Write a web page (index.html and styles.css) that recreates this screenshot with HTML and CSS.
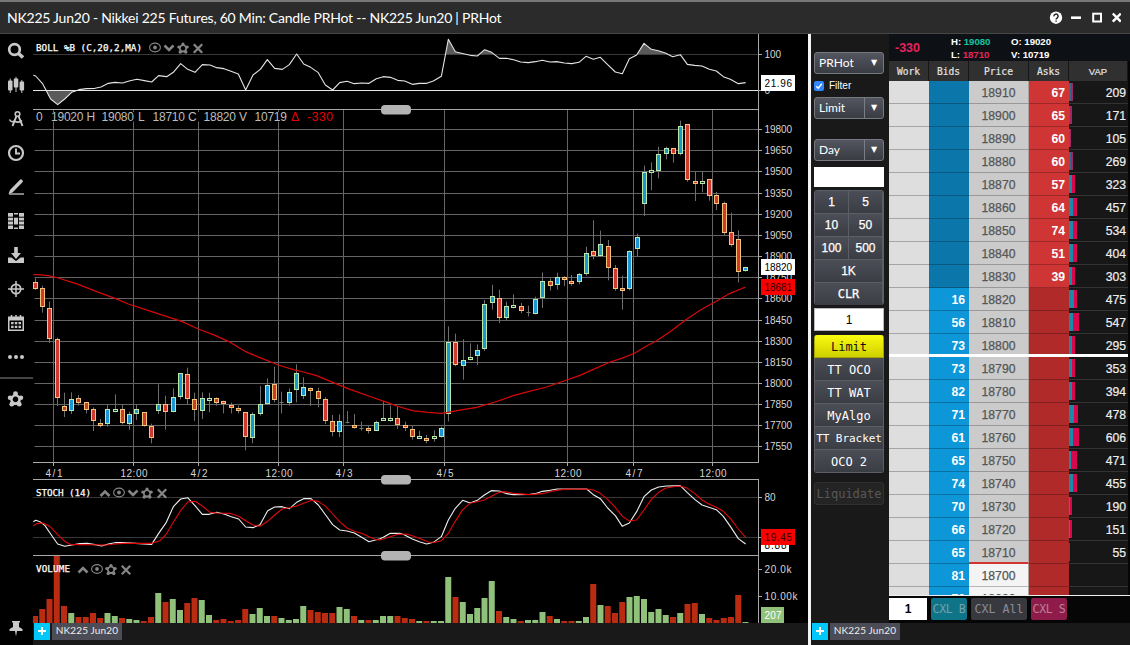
FILE: index.html
```
<!DOCTYPE html>
<html lang="en">
<head>
<meta charset="utf-8">
<title>NK225 Jun20 | PRHot</title>
<link rel="stylesheet" href="styles.css">
</head>
<body>
<svg class="defs" width="0" height="0" aria-hidden="true">
  <defs>
    <symbol id="eye" viewBox="0 0 12 12"><ellipse cx="6" cy="5.500" rx="5.400" ry="4.400" fill="none" stroke="#858585" stroke-width="1.100"/><circle cx="6" cy="5.500" r="1.900" fill="#858585"/></symbol>
    <symbol id="down" viewBox="0 0 12 12"><path d="M1.500 3.500 6 8l4.500-4.500" fill="none" stroke="#858585" stroke-width="2.600"/></symbol>
    <symbol id="up" viewBox="0 0 12 12"><path d="M1.500 9 6 4.500 10.500 9" fill="none" stroke="#858585" stroke-width="2.600"/></symbol>
    <symbol id="gear" viewBox="0 0 12 12"><g fill="#858585"><path fill-rule="evenodd" d="M6 1.500 10.500 4.800 9 10.500H3L1.500 4.800ZM6 4a2.300 2.300 0 1 0 .01 0Z"/><circle cx="6" cy="2" r="1.600"/><circle cx="10.200" cy="5" r="1.600"/><circle cx="8.800" cy="10" r="1.700"/><circle cx="3.200" cy="10" r="1.700"/><circle cx="1.800" cy="5" r="1.600"/></g></symbol>
    <symbol id="x" viewBox="0 0 12 12"><path d="M1.800 2.300 10.200 10.700M10.200 2.300 1.800 10.700" stroke="#858585" stroke-width="2.300"/></symbol>
  </defs>
</svg>
<div class="window">
  <header class="titlebar">
    <h1 class="title">NK225 Jun20 - Nikkei 225 Futures, 60 Min: Candle PRHot -- NK225 Jun20 | PRHot</h1>
    <svg class="winicons" width="72" height="16" viewBox="1049 11 72 16">
      <circle cx="1056" cy="18.700" r="6.200" fill="#fff"/>
      <path d="M1053.900 17.400a2.100 2.100 0 1 1 3.200 1.600c-.7.500-1 .7-1 1.400M1056.100 21.600v1.200" fill="none" stroke="#2b2b2b" stroke-width="1.500"/>
      <path d="M1071 18.700h10" stroke="#fff" stroke-width="2.600"/>
      <rect x="1093.200" y="14.700" width="7.800" height="7.800" fill="none" stroke="#fff" stroke-width="2"/>
      <path d="M1112.800 14.500l8 8.200m0-8.200l-8 8.200" stroke="#fff" stroke-width="2.500"/>
    </svg>
  </header>
  <main class="main">
    <nav class="tools">
      <span class="tool"><svg width="18" height="18"><circle cx="7.500" cy="7.500" r="5.300" fill="none" stroke="#c8c8c8" stroke-width="2.700"/><path d="M11.500 11.500 16 15.500" stroke="#c8c8c8" stroke-width="3.600"/></svg></span>
      <span class="tool"><svg width="18" height="18" fill="#c8c8c8"><rect x="1" y="4.500" width="4.500" height="10" rx="1"/><rect x="6.800" y="2.500" width="4.500" height="9" rx="1"/><rect x="12.600" y="5.500" width="4.500" height="9" rx="1"/><path d="M2.700 2.500h1v14.500h-1zM8.500 1h1v15h-1zM14.300 4h1v13h-1z"/></svg></span>
      <span class="tool"><svg width="18" height="18" fill="none" stroke="#c8c8c8"><circle cx="10.500" cy="4" r="2.300" stroke-width="1.600"/><path d="M9.500 6 5.500 16M11.500 6l4 10" stroke-width="2"/><path d="M2.500 9.500c1.500 3 3 2.500 5 1.500M7 11c3 1.500 6 1.500 8-.5" stroke-width="1.600"/></svg></span>
      <span class="tool"><svg width="18" height="18" fill="none" stroke="#c8c8c8"><circle cx="9" cy="9" r="7" stroke-width="2.200"/><path d="M9 4.500V9.500h4" stroke-width="1.900"/></svg></span>
      <span class="tool"><svg width="18" height="18"><path d="M3 12 13 1.800q1.200-1 2.300.2t.2 2.300L5.500 14.500 1.500 16Z" fill="#c8c8c8"/><path d="M2 16h15" stroke="#c8c8c8" stroke-width="1.300"/></svg></span>
      <span class="tool"><svg width="18" height="18"><rect x="1" y="1" width="16" height="16" fill="#c8c8c8"/><path d="M1 5.200h16M1 9h5.500M11.500 9H17M1 13h16" stroke="#000" stroke-width="1"/><path d="M6.500 1v16M11.500 1v16" stroke="#000"/><path d="M7 2.500h4v2.500H7zM7 13h4v2.500H7z" fill="#000"/></svg></span>
      <span class="tool"><svg width="18" height="18" fill="#c8c8c8"><path d="M7.200 1h3.600v6H14l-5 6-5-6h3.200z"/><path d="M1 11.500h3.500L9 15l4.500-3.500H17V17H1z"/></svg></span>
      <span class="tool"><svg width="18" height="18" fill="none" stroke="#c8c8c8"><circle cx="9" cy="9" r="4.700" stroke-width="1.700"/><path d="M9 1v16M1 9h16" stroke-width="1.500"/></svg></span>
      <span class="tool"><svg width="18" height="18"><path d="M1 2.500h16V17H1z" fill="#c8c8c8"/><path d="M2.500 6.500h13v9h-13z" fill="#000"/><path d="M4.500 1v3M9 1v3M13.500 1v3" stroke="#c8c8c8" stroke-width="1.500"/><path d="M4.100 9.200h10M4.100 12.800h10" stroke="#c8c8c8" stroke-width="2.300" stroke-dasharray="2.500 1.200"/></svg></span>
      <span class="tool"><svg width="18" height="18" fill="#c8c8c8"><circle cx="3" cy="9" r="2"/><circle cx="9" cy="9" r="2"/><circle cx="15" cy="9" r="2"/></svg></span>
      <span class="toolrule"></span>
      <span class="tool"><svg width="17" height="16" viewBox="0 0 12 12"><g fill="#c8c8c8"><path fill-rule="evenodd" d="M6 1.500 10.500 4.800 9 10.500H3L1.500 4.800ZM6 4.200a2.100 2.100 0 1 0 .01 0Z"/><circle cx="6" cy="2" r="1.800"/><circle cx="10.100" cy="5" r="1.700"/><circle cx="8.800" cy="9.900" r="1.800"/><circle cx="3.200" cy="9.900" r="1.800"/><circle cx="1.900" cy="5" r="1.700"/></g></svg></span>
      <span class="tool pin"><svg width="14" height="17" fill="#c8c8c8"><path d="M3 1h8v1.500h-1V7l3.500 2V11H8L7 16.500 6 11H.5V9L4 7V2.500H3z"/></svg></span>
    </nav>
    <section class="chartcol">
      <svg id="chart" class="chart" width="775" height="589" viewBox="33 34 775 589"></svg>
      <footer class="tabs"><span class="plus"><svg width="8" height="8"><path d="M4 0v8M0 4h8" stroke="#fff" stroke-width="2"/></svg></span><span class="tab">NK225 Jun20</span></footer>
    </section>
    <section class="trader">
      <div class="traderbody">
        <div class="ticket">
          <div class="select whole"><span>PRHot</span><i>▼</i></div>
          <label class="filter"><svg width="10" height="10"><rect width="10" height="10" rx="2" fill="#2f86ff"/><path d="M2.200 5.200 4.200 7.200 7.800 2.700" fill="none" stroke="#fff" stroke-width="1.400"/></svg>Filter</label>
          <div class="select"><span>Limit</span><i>▼</i></div>
          <div class="select day"><span>Day</span><i>▼</i></div>
          <div class="blank"></div>
          <div class="keypad"><b>1</b><b>5</b><b>10</b><b>50</b><b>100</b><b>500</b><b class="wide">1K</b><b class="wide mono">CLR</b></div>
          <div class="qty">1</div>
          <div class="orders"><b class="on">Limit</b><b>TT OCO</b><b>TT WAT</b><b>MyAlgo</b><b class="tight">TT Bracket</b><b>OCO 2</b></div>
          <div class="liquidate">Liquidate</div>
        </div>
        <div class="ladder">
          <div class="stats">
            <span class="net">-330</span>
            <span class="pair"><span>H: <em class="hi">19080</em></span><span>L: <em class="lo">18710</em></span></span>
            <span class="pair"><span>O: 19020</span><span>V: 10719</span></span>
          </div>
          <div class="heads"><span>Work</span><span>Bids</span><span>Price</span><span>Asks</span><span class="sans">VAP</span></div>
          <div id="rows" class="rows"></div>
          <div class="cancel"><span class="cq">1</span><span class="cb">CXL B</span><span class="ca">CXL All</span><span class="cs">CXL S</span></div>
        </div>
      </div>
      <footer class="tabs"><span class="plus"><svg width="8" height="8"><path d="M4 0v8M0 4h8" stroke="#fff" stroke-width="2"/></svg></span><span class="tab">NK225 Jun20</span></footer>
    </section>
  </main>
</div>
<script src="app.js"></script>
</body>
</html>
```
FILE: styles.css
```
* { box-sizing: border-box; }
body { margin: 0; background: #000; font-family: "Liberation Sans", Arial, sans-serif; color: #fff; }
.defs { position: absolute; }
.window { width: 1130px; height: 645px; display: flex; flex-direction: column; overflow: hidden; }
.titlebar { height: 34px; flex: none; background: #2b2b2b; border-top: 2px solid #777; border-bottom: 1px solid #464646; display: flex; align-items: center; justify-content: space-between; padding: 0 9px 0 7px; }
.title { margin: 0; font: 400 14px Lato, sans-serif; letter-spacing: -.23px; white-space: nowrap; }
.main { display: flex; flex: 1; min-height: 0; }
.tools { width: 33px; flex: none; display: flex; flex-direction: column; background: #000; }
.tool { height: 34px; display: flex; align-items: center; padding-left: 7px; }
.tool svg { display: block; }
.toolrule { height: 2px; background: #444; margin: 3px 0 3px; }
.pin { margin-top: auto; padding-left: 9px; }
.chartcol { width: 775px; flex: none; }
.chart { display: block; background: #000; font-family: "Liberation Sans", Arial, sans-serif; }
.axis { font-size: 10px; fill: #d6d6d6; }
.name { font: 400 9.300px "DejaVu Sans Mono", monospace; fill: #fff; stroke: #fff; stroke-width: .25px; }
.ohlc { font-size: 12px; fill: #bdbdbd; }
.delta { fill: #e80000; }
.tabs { height: 22px; background: #191919; display: flex; gap: 2px; padding-left: 1px; }
.plus { width: 16px; height: 17px; background: #00c8fa; display: flex; align-items: center; justify-content: center; padding-bottom: 2px; }
.tab { width: 70px; height: 17px; background: #4b4c55; font: 10px/15px Lato, sans-serif; text-align: center; color: #eee; letter-spacing: .15px; white-space: nowrap; }
.trader { flex: 1; display: flex; flex-direction: column; border-left: 3px solid #f4f4f4; background: #191919; }
.traderbody { height: 589px; display: flex; }
.ticket { width: 78px; flex: none; padding: 18px 5px 0 3px; background: #191919; }
.select { width: 70px; height: 22px; display: flex; align-items: center; background: linear-gradient(#535660, #3a3c43); border: 1px solid #777980; border-radius: 3px; font: 12px Lato, sans-serif; }
.select span { flex: 1; padding: 0 0 1px 4px; }
.select i { width: 19px; height: 20px; border-left: 1px solid #7b7d84; font: 8px/19px "DejaVu Sans", sans-serif; text-align: center; }
.select.whole i { border-left-color: transparent; }
.day { margin-top: 20px; }
.filter { height: 23px; display: flex; align-items: center; gap: 5px; font-size: 10px; }
.filter svg { display: block; }
.blank { height: 20px; margin-top: 6px; background: #fff; }
.keypad { display: grid; grid-template-columns: 1fr 1fr; margin-top: 3px; border: 1px solid #5d6068; border-bottom: 0; border-radius: 3px; height: 115px; grid-auto-rows: 23px; overflow: hidden; }
.keypad b, .orders b { display: flex; align-items: center; justify-content: center; font-weight: 400; font-size: 12px; background: linear-gradient(#4b4e57, #3b3d44); border-bottom: 1px solid #5c5e65; border-right: 1px solid #5c5e65; }
.keypad b { -webkit-text-stroke: .25px #fff; }
.keypad .wide { grid-column: span 2; }
.keypad .mono { font-family: "DejaVu Sans Mono", monospace; }
.qty { height: 23px; margin-top: 3px; background: #fff; color: #000; border: 1px solid #bbb; font: 12px/23px "Liberation Sans", sans-serif; text-align: center; }
.orders { margin-top: 4px; display: grid; grid-auto-rows: 23px; border-radius: 3px; overflow: hidden; }
.orders b { font: 12px "DejaVu Sans Mono", monospace; white-space: nowrap; border-left: 1px solid #5c5e65; padding-top: 1px; }
.orders .tight { font-size: 11px; letter-spacing: -.05px; }
.orders .on { background: linear-gradient(#fbfb10, #cfcf00); color: #111; border-color: #a5a500; }
.liquidate { height: 23px; margin-top: 9px; background: #242424; border: 1px solid #303030; border-radius: 3px; color: #585858; font: 12px/23px "DejaVu Sans Mono", monospace; text-align: center; }
.ladder { width: 238px; flex: 1; display: flex; flex-direction: column; background: #060606; }
.stats { height: 27px; flex: none; background: #0d1116; display: flex; font-weight: 700; font-size: 9.700px; line-height: 13px; padding-top: 1px; }
.net { width: 62px; padding-left: 6px; color: #e5245d; font-size: 12.500px; line-height: 27px; }
.pair { width: 60px; display: flex; flex-direction: column; white-space: nowrap; letter-spacing: -.05px; }
.pair em { font-style: normal; }
.hi { color: #16c2a0; }
.lo { color: #e5245d; }
.heads { height: 20px; flex: none; display: grid; grid-template-columns: 40px 40px 60px 40px 59px; }
.heads span { background: #303030; border-right: 1px solid #161616; border-bottom: 1px solid #1c1c1c; font: 9.600px/21px "DejaVu Sans Mono", monospace; text-align: center; color: #e2e2e2; -webkit-text-stroke: .2px #e2e2e2; }
.heads .sans { font-family: "Liberation Sans", sans-serif; font-size: 9.500px; }
.rows { height: 514px; flex: none; overflow: hidden; position: relative; }
.row { height: 23px; display: grid; grid-template-columns: 40px 40px 60px 40px 59px; font-size: 12.200px; line-height: 24px; }
.row > span { border-bottom: 1px solid rgba(0, 0, 0, .25); white-space: nowrap; height: 23px; }
.work { background: #dedede; }
.bid { background: #0b76aa; font-weight: 700; text-align: right; padding-right: 4px; }
.bid.live { background: #0d96d8; }
.price { background: #cbcbcb; color: #555; -webkit-text-stroke: .25px #555; text-align: center; border-right: 1px solid #b0a0a0; }
.price.open { background: #f4f4f4; }
.row > .price.edge { border-bottom: 2px solid #d23434; }
.ask { background: #b12a2a; font-weight: 700; text-align: right; padding-right: 4px; }
.ask.live { background: #d03535; }
.vap { background: #171717; display: flex; align-items: center; padding-right: 2px; }
.row > .vap { border-bottom-color: #333; }
.vap i { height: 18px; background: #1c89a6; }
.vap i + i { background: #d8064f; }
.vap.dim i { background: #356a8e; }
.vap.dim i + i { background: #a02664; }
.vap u { margin-left: auto; padding-top: 1px; text-decoration: none; color: #eee; -webkit-text-stroke: .2px #eee; }
.mid { position: absolute; left: 0; top: 273px; width: 239px; height: 3px; background: #fff; }
.cancel { height: 28px; border-top: 1px solid #eee; display: flex; padding-top: 2px; font: 11.600px/23px "DejaVu Sans Mono", monospace; color: #8c8c94; text-align: center; white-space: nowrap; }
.cancel span { height: 22px; border-radius: 2px; }
.cancel .cq { width: 38px; background: #fff; color: #000; border-radius: 0; font: 700 12px/22px "Liberation Sans", sans-serif; margin-right: 4px; }
.cb { width: 36px; background: #0e7488; margin-right: 4px; color: #75a1aa; }
.ca { width: 56px; background: #38393f; margin-right: 4px; }
.cs { width: 36px; background: #8e1b4a; color: #b58296; }
.cancel .cb, .cancel .cs { letter-spacing: -.4px; }
```
FILE: app.js
```
// Candle columns: wick top, body top, body bottom, wick bottom (thirds of a pixel below y=215), kind.
const candles = `190,201,221,225,r 212,219,275,293,r 260,279,371,384,r 368,373,551,573,r 533,573,587,606,r 532,552,587,597,b 540,549,564,572,r 561,561,585,595,r 577,583,620,648,r 612,625,632,637,r
570,583,629,635,b 538,583,590,592,g 570,583,626,628,r 590,597,626,644,b 570,583,599,615,b 592,592,635,635,r 626,633,668,685,r 508,567,587,597,b 542,567,592,644,r 520,546,592,592,b
474,474,545,553,b 458,478,554,570,r 533,552,584,618,r 532,549,587,612,b 533,549,557,592,g 547,549,564,572,r 557,559,567,595,r 563,570,578,595,r 572,579,587,595,r 592,592,668,706,r
592,597,668,685,b 513,567,596,602,b 490,510,566,568,b 455,507,554,562,r 530,560,560,595,d 520,532,564,572,b 448,474,524,562,b 487,516,542,552,b 518,519,527,573,r 518,529,554,577,r
547,552,617,627,r 600,618,650,664,r 598,618,650,666,b 588,620,620,625,d 597,629,637,641,r 620,640,640,647,d 633,639,647,655,r 617,621,647,648,b 558,609,617,617,g 572,609,617,620,g
573,609,629,642,r 620,629,638,648,r 633,641,665,674,r 647,663,671,671,g 660,669,677,685,r 646,663,671,680,g 635,639,665,668,b 334,381,598,619,b 356,381,449,454,r 373,435,452,494,b
385,426,434,436,g 388,405,422,450,b 255,267,401,408,b 209,244,266,284,b 224,249,308,324,r 260,273,308,316,b 238,270,278,280,g 264,274,290,295,r 272,292,292,304,d 245,252,296,298,b
172,198,248,279,b 190,198,212,227,r 173,187,212,224,b 184,187,196,213,r 180,198,206,212,r 174,178,203,208,b 95,114,176,182,b 16,108,124,133,r 47,88,124,126,b 75,94,161,196,r
150,159,221,227,r 182,219,227,284,r 106,109,224,226,b 56,67,104,124,b -148,-128,-31,3,b -158,-135,-127,-74,g -205,-182,-132,-110,b -205,-200,-181,-167,b -200,-200,-181,-157,r -283,-266,-181,-179,b
-273,-272,-103,-100,r -129,-102,-94,-42,r -132,-102,-94,-68,g -108,-107,-55,-43,r -69,-59,-33,-15,r -40,-35,55,60,r -7,52,90,95,r 46,72,170,202,r 157,157,170,170,b`.split(/\s+/);
const volumes = `438r 417r 387r 256r 408r 429g 441r 441r 429r 444r 429g 438g 444r 447g 450g 453r 441r 369g 396r 387g 420g 399r 384r 390g 435g 450r 447r 453r 450r 417r 432g 414g 438g 438r 444g 450g 447g 408g 420r 426r 429r 429r 411g 417g 438r 450g 450r 450g 438g 438g 438r 444r 447r 453g 453r 453g 453g 321g 381r 396g 432g 414g 384g 333g 423r 441g 447g 453r 450g 450g 426g 438r 447g 453r 453r 453g 441g 342r 405g 408r 429r 396r 381g 378g 387g 426g 417g 435g 441r 429g 402r 399r 432g 444r 450r 444r 441r 375r 456g`.split(' ');
// Each series: left part, then a right part whose x starts at 1140.
const join = (a, b) => a + ' ' + b.split(' ').map(p => { const [x, y] = p.split(','); return (+x + 1140) + ',' + y; }).join(' ');
const boll = join('100,226 107,228 127,250 152,297 173,314 194,297 215,277 237,269 260,266 285,265 303,261 325,250 345,247 368,249 390,242 411,238 433,242 455,246 476,227 500,230 520,217 542,191 563,208 585,217 607,194 630,195 650,203 672,206 693,214 715,222 737,270 759,225 781,208 802,179 824,205 847,208 868,194 890,162 911,192 932,202 954,217 976,255 998,270 1019,248 1041,244 1063,251 1085,249 1107,250 1129,236', '10,230 31,232 53,241 74,243 97,253 118,250 140,250 160,243 184,229 205,118 226,155 250,161 271,166 292,168 314,149 335,157 358,175 380,175 401,179 422,186 445,188 466,185 487,181 510,186 530,185 553,189 575,191 597,187 618,169 640,178 661,172 683,194 706,216 727,221 748,176 770,165 792,130 814,148 835,152 856,159 878,170 901,164 922,193 944,196 966,198 988,208 1009,213 1030,230 1051,238 1075,251 1097,248');
const ma = join('100,179 115,179 145,182 175,189 235,208 290,230 345,250 385,267 455,290 545,319 595,342 645,361 685,379 735,409 780,428 835,450 880,464 910,471 950,482 1000,503 1050,523', '0,555 15,560 50,573 97,587 145,592 184,595 205,592 235,586 290,577 345,561 400,542 445,530 500,516 560,495 600,481 640,463 690,441 725,430 765,414 800,393 830,377 870,350 920,313 960,286 1010,258 1050,235 1097,216');
const fast = join('100,155 107,151 120,155 135,167 152,192 173,222 194,229 215,225 240,221 262,220 285,224 305,228 325,222 345,218 370,218 455,223 476,190 499,157 520,110 542,87 563,83 585,107 607,133 628,133 650,127 672,132 694,140 716,147 737,171 759,173 780,164 803,122 824,111 846,110 868,116 890,97 911,86 933,86 955,105 977,135 998,164 1019,180 1041,183 1063,189 1085,202 1107,215', '0,206 10,202 31,190 60,190 74,195 97,207 118,215 140,222 160,217 184,200 205,150 226,115 248,91 270,99 292,91 313,75 334,62 358,63 380,71 401,74 450,73 466,71 487,64 510,61 532,57 620,57 640,74 661,86 683,114 706,137 727,169 748,159 770,125 792,80 814,60 836,51 860,48 901,47 922,68 944,88 966,105 1009,119 1030,139 1051,169 1075,206 1097,222');
const slow = join('100,168 110,161 130,159 152,171 173,194 194,214 210,223 240,224 320,225 345,222 370,220 455,220 480,212 497,195 520,157 542,122 563,96 585,94 607,108 630,127 650,129 690,130 716,139 737,152 759,165 780,169 803,154 824,135 846,117 868,113 890,108 911,100 935,91 955,94 977,109 998,132 1019,155 1041,174 1063,184 1085,190 1107,200 1129,209', '0,210 10,207 31,200 53,193 80,192 97,197 118,205 145,216 165,217 184,212 205,190 226,154 248,119 270,100 292,95 313,90 334,79 358,67 375,65 401,70 450,74 487,71 520,63 550,58 618,57 640,60 661,70 683,88 706,112 727,139 748,153 770,150 792,120 814,88 836,67 856,55 880,50 901,48 922,55 944,70 966,90 988,103 1009,112 1030,124 1051,145 1075,177 1097,202');

let s = '';
const line = (x1, y1, x2, y2, c, w = 1) => { s += `<path d="M${x1} ${y1}L${x2} ${y2}" stroke="${c}" stroke-width="${w}"/>`; };
const rect = (x, y, w, h, c, extra = '') => { s += `<rect x="${x}" y="${y}" width="${w}" height="${h}" fill="${c}" ${extra}/>`; };
const text = (x, y, t, len, cls = 'axis', extra = '') => { s += `<text x="${x}" y="${y}" class="${cls}" textLength="${len}" ${extra}>${t}</text>`; };
const poly = (pts, y, c, w) => { s += `<polyline transform="translate(0 ${y}) scale(.33333)" points="${pts}" fill="none" stroke="${c}" stroke-width="${w}" stroke-linejoin="round"/>`; };
const icon = (id, x, y) => { s += `<use href="#${id}" x="${x - 6}" y="${y - 6}" width="12" height="12"/>`; };

const grid = '#646464', frame = '#a8a8a8', dim = '#383838';
const days = [[53.5, '4/1'], [133.5, '12:00'], [198.5, '4/2'], [278.5, '12:00'], [343.5, '4/3'], [444.5, '4/5'], [567.5, '12:00'], [633.5, '4/7'], [712.5, '12:00']];
days.forEach(([x, t]) => {
  line(x, 110, x, 462, grid); line(x, 463, x, 466, frame);
  const w = t.length > 3 ? 27 : 17;
  text(x - w / 2 + .5, 476.500, t, w);
});
const prices = [129.5, 150.5, 171.5, 193.5, 214.5, 235.5, 256.5, 277.5, 298.5, 320.5, 341.5, 362.5, 383.5, 404.5, 425.5, 446.5];
prices.forEach((y, i) => { line(34.500, y, 758, y, grid); line(759, y, 762, y, frame); text(764.500, y + 3.500, 19800 - 150 * i, 27.500); });
line(33, 54.500, 758, 54.500, dim); line(759, 54.500, 762, 54.500, frame); text(764.500, 58, '100', 16.500);
line(759, 90.500, 762, 90.500, frame); text(764.500, 94, '0', 5.500);
[497.5, 537.5].forEach(y => { line(33, y, 758, y, dim); line(759, y, 762, y, frame); });
text(764.500, 501, '80', 11);
line(759, 569.5, 762, 569.5, frame); text(764.500, 572.500, '20.0k', 27);
line(759, 596.5, 762, 596.5, frame); text(764.500, 600, '10.00k', 33);

// Bollinger excursions beyond 0 and 100
s += '<g transform="scale(.33333)" fill="#5a5a5a"><path d="M138 271 152 297 173 314 194 297 215 277 225 271ZM1338 163 1345 118 1366 155 1395 163ZM1441 163 1454 149 1475 157 1483 163ZM1912 163 1932 130 1954 148 1975 152 2005 163Z"/></g>';
line(33, 90.500, 758, 90.500, '#e6e6e6', 1.200);
poly(boll, 0, '#e4e4e4', 3.300);

rect(34, 112, 300, 9.500, '#000');
[['0', 36, 7], ['19020', 51, 32.500], ['H', 86.500, 7.500], ['19080', 101.500, 32.500], ['L', 138, 6], ['18710', 152.500, 32.500], ['C', 188, 7.500], ['18820', 203.500, 32.500], ['V', 239, 7.500], ['10719', 254.500, 32.500]].forEach(([t, x, w]) => text(x, 121, t, w, 'ohlc'));
text(291, 121, 'Δ', 8, 'ohlc delta'); text(307, 121, '-330', 26, 'ohlc delta');

const tones = { r: ['#d03a2c', '#f2c679'], b: ['#1c96d0', '#bce8a8'], g: ['#20303a', '#bce8a8'] };
candles.forEach((c, i) => {
  const p = c.split(','), k = p[4], x = Math.round(32.9 + 7.25 * i), y = v => 215 + v / 3;
  line(x + 2.500, y(+p[0]), x + 2.500, y(+p[3]), '#6e6e6e');
  if (k === 'd') { line(x + .500, Math.round(y(+p[1])) + .500, x + 4.500, Math.round(y(+p[1])) + .500, '#777'); return; }
  const top = Math.round(y(+p[1])) + .5, h = Math.max(2, Math.round((p[2] - p[1]) / 3) - 1);
  rect(x + .500, top, 4, h, tones[k][0], `stroke="${tones[k][1]}"`);
});
poly(ma, 215, '#d80808', 3.600);

volumes.forEach((v, i) => {
  const t = parseInt(v, 10), x = 32 + 7.25 * i;
  rect(Math.max(33, x), 470 + t / 3, x < 33 ? 5 : 6, (459 - t) / 3, v.endsWith('r') ? '#b92c12' : '#90c17b');
});
poly(fast, 470, '#eee', 3.300);
poly(slow, 470, '#e00808', 3.300);

[109.5, 479.5, 555.5].forEach(y => line(33, y, 758, y, frame));
line(33, 462.5, 759, 462.5, frame);
line(758.5, 34, 758.5, 463, frame); line(758.5, 479, 758.5, 623, frame);
[105, 475, 551].forEach(y => rect(381, y, 30, 9.500, '#b3b3b3', 'rx="4"'));

const badge = (y, w, bg, fg, t) => { rect(761, y, w, 16, bg); text(764.500, y + 11.500, t, t.length > 3 ? 27.500 : 17, 'axis', `style="fill:${fg}"`); };
badge(75, 34, '#fff', '#000', '21.96');
badge(259, 34, '#fff', '#000', '18820');
badge(279, 34, '#fb0000', '#300', '18681');
rect(761, 536, 28, 16, '#fff'); text(764.500, 549, '8.88', 22, 'axis', 'style="fill:#000"');
badge(529, 34, '#fb0000', '#300', '19.45');
badge(607, 23, '#90c17b', '#fff', '207');

text(36, 51, 'BOLL %B (C,20,2,MA)', 106, 'name');
[['eye', 155], ['down', 169], ['gear', 183], ['x', 198]].forEach(([n, x]) => icon(n, x, 48));
text(36, 496, 'STOCH (14)', 55, 'name');
[['up', 105], ['eye', 119], ['down', 133], ['gear', 147], ['x', 162]].forEach(([n, x]) => icon(n, x, 493));
text(36, 571.500, 'VOLUME', 34, 'name');
[['up', 83], ['eye', 97], ['gear', 111], ['x', 126]].forEach(([n, x]) => icon(n, x, 569.5));
document.getElementById('chart').innerHTML = s;

// Depth ladder: quantity, volume at price, and the two volume bar widths
const asks = [67, 65, 60, 60, 57, 64, 74, 51, 39];
const bids = [16, 56, 73, 73, 82, 71, 61, 65, 74, 70, 66, 65, 81, 72];
const vap = [[209, 1.5, 2.5], [171, 1, 2], [105, 1, 1], [269, 1.5, 2.5], [323, 3, 3], [457, 4, 4], [534, 4, 4], [404, 3.5, 4], [303, 3, 3], [475, 5, 3], [547, 4, 6], [295, 3, 3], [353, 3, 3], [394, 3, 3], [478, 5, 4], [606, 4, 6], [471, 2, 6], [455, 4, 4], [190, 1, 2], [151, 1, 2], [55, 0, 1]];
let rows = '';
for (let i = 0; i < 23; i++) {
  const v = vap[i], live = i < 9;
  rows += `<div class="row"><span class="work"></span><span class="bid ${live ? '' : 'live'}">${live ? '' : bids[i - 9]}</span><span class="price ${i > 20 ? 'open' : ''} ${i === 20 ? 'edge' : ''}">${18910 - 10 * i}</span><span class="ask ${live ? 'live' : ''}">${live ? asks[i] : ''}</span><span class="vap ${i < 4 ? 'dim' : ''}">${v ? `<i style="width:${v[1]}px"></i><i style="width:${v[2]}px"></i><u>${v[0]}</u>` : ''}</span></div>`;
}
document.getElementById('rows').innerHTML = rows + '<div class="mid"></div>';
```
